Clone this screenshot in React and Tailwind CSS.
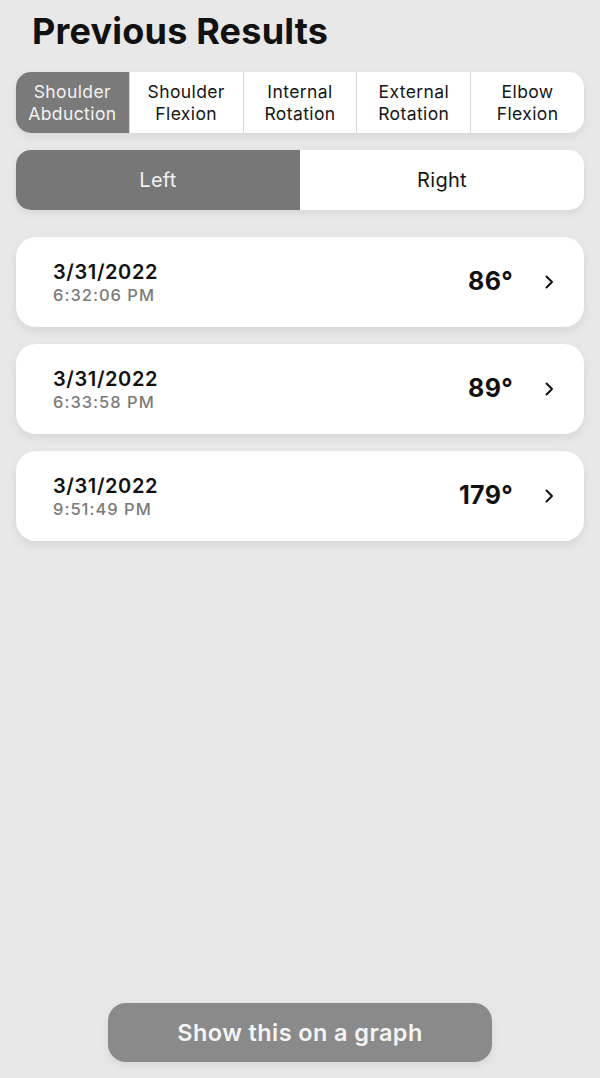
import React, { useState } from "react";

const MOTIONS = [
  ["Shoulder", "Abduction"],
  ["Shoulder", "Flexion"],
  ["Internal", "Rotation"],
  ["External", "Rotation"],
  ["Elbow", "Flexion"],
];

const RESULTS = [
  { date: "3/31/2022", time: "6:32:06 PM", angle: "86°" },
  { date: "3/31/2022", time: "6:33:58 PM", angle: "89°" },
  { date: "3/31/2022", time: "9:51:49 PM", angle: "179°" },
];

function Chevron() {
  return (
    <svg width="12" height="16" viewBox="0 0 12 16" fill="none">
      <path d="M3.5 2.5 L9 8 L3.5 13.5" stroke="#111" strokeWidth="2" strokeLinecap="round" strokeLinejoin="round" />
    </svg>
  );
}

export default function App() {
  const [motion, setMotion] = useState(0);
  const [side, setSide] = useState("left");

  return (
    <div
      className="w-[600px] h-[1078px] bg-[#e8e8e8] flex flex-col px-4 pb-4"
      style={{ fontFamily: "Inter, 'Noto Sans', sans-serif" }}
    >
      <h1 className="pl-4 pt-[8px] text-[36px] leading-[46px] font-bold text-[#111] tracking-[0.2px]">
        Previous Results
      </h1>

      {/* motion tabs */}
      <div className="mt-[18px] flex h-[61px] bg-white rounded-[15px] overflow-hidden shadow-[0_3px_8px_rgba(0,0,0,0.08)]">
        {MOTIONS.map((m, i) => (
          <button
            key={i}
            onClick={() => setMotion(i)}
            className={`flex-1 flex flex-col items-center justify-center text-[17.5px] leading-[22px] tracking-[0.4px] ${
              i > 0 ? "border-l border-[#d6d6d6]" : ""
            } ${motion === i ? "bg-[#7a7a7a] text-[#f2f2f2]" : "text-[#151515]"}`}
          >
            <span>{m[0]}</span>
            <span>{m[1]}</span>
          </button>
        ))}
      </div>

      {/* side toggle */}
      <div className="mt-[17px] flex h-[60px] bg-white rounded-[15px] overflow-hidden shadow-[0_3px_8px_rgba(0,0,0,0.08)]">
        <button
          onClick={() => setSide("left")}
          className={`flex-1 text-[20px] tracking-[0.3px] ${side === "left" ? "bg-[#777777] text-[#f2f2f2]" : "text-[#151515]"}`}
        >
          Left
        </button>
        <button
          onClick={() => setSide("right")}
          className={`flex-1 text-[20px] tracking-[0.3px] ${side === "right" ? "bg-[#777777] text-[#f2f2f2]" : "text-[#151515]"}`}
        >
          Right
        </button>
      </div>

      {/* results */}
      <div className="mt-[27px] flex flex-col gap-[17px]">
        {RESULTS.map((r, i) => (
          <div
            key={i}
            className="h-[90px] bg-white rounded-[20px] flex items-center pl-[37px] pr-[29px] shadow-[0_4px_10px_rgba(0,0,0,0.08)]"
          >
            <div className="flex flex-col">
              <span className="text-[20px] leading-[25px] font-semibold text-[#111] tracking-[0.6px]">{r.date}</span>
              <span className="text-[16.5px] leading-[20px] font-medium text-[#7a7a7a] tracking-[1px]">{r.time}</span>
            </div>
            <span className="ml-auto text-[25px] font-bold text-[#111] tracking-[0.3px]">{r.angle}</span>
            <span className="ml-[30px]">
              <Chevron />
            </span>
          </div>
        ))}
      </div>

      <div className="mt-auto flex justify-center">
        <button className="w-[384px] h-[59px] rounded-[18px] bg-[#8a8a8a] text-[#f4f4f4] text-[23.5px] font-semibold tracking-[0.4px] shadow-[0_3px_8px_rgba(0,0,0,0.08)]">
          Show this on a graph
        </button>
      </div>
    </div>
  );
}
